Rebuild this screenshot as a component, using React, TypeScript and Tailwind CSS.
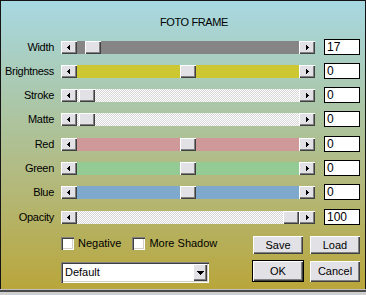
import React from "react";

const raised =
  "shadow-[inset_1px_1px_0_#ffffff,inset_-1px_-1px_0_#404040,inset_-2px_-2px_0_#808080]";
const sunken =
  "shadow-[inset_1px_1px_0_#808080,inset_2px_2px_0_#404040,inset_-1px_-1px_0_#ffffff,inset_-2px_-2px_0_#d4d0c8]";
const dither =
  "bg-[image:repeating-conic-gradient(#d6d6d6_0_25%,#ffffff_0_50%)] bg-[length:2px_2px]";

function Arrow({ dir }: { dir: "left" | "right" }) {
  return (
    <div className={`flex h-full w-[16px] shrink-0 items-center justify-center bg-[#e2e1e6] ${raised}`}>
      <svg width="3" height="5" shapeRendering="crispEdges" className={dir === "right" ? "ml-[1px]" : "mr-[1px]"}>
        {dir === "left" ? (
          <g fill="#000">
            <rect x="0" y="2" width="1" height="1" />
            <rect x="1" y="1" width="1" height="3" />
            <rect x="2" y="0" width="1" height="5" />
          </g>
        ) : (
          <g fill="#000">
            <rect x="0" y="0" width="1" height="5" />
            <rect x="1" y="1" width="1" height="3" />
            <rect x="2" y="2" width="1" height="1" />
          </g>
        )}
      </svg>
    </div>
  );
}

function Slider({ track, thumb }: { track: string; thumb: number }) {
  return (
    <div className="mt-[2px] flex h-[13px] w-[254px]">
      <Arrow dir="left" />
      <div className={`relative flex-1 ${track}`}>
        <div
          className={`absolute top-0 h-full w-[16px] bg-[#e2e1e6] ${raised}`}
          style={{ left: thumb }}
        />
      </div>
      <Arrow dir="right" />
    </div>
  );
}

const rows = [
  { label: "Width", track: "bg-[#858585]", thumb: 8, value: "17", mt: "mt-[11px]" },
  { label: "Brightness", track: "bg-[#cdc731]", thumb: 103, value: "0", mt: "mt-[8px]" },
  { label: "Stroke", track: dither, thumb: 2, value: "0", mt: "mt-[8px]" },
  { label: "Matte", track: dither, thumb: 2, value: "0", mt: "mt-[8px]" },
  { label: "Red", track: "bg-[#cf9999]", thumb: 103, value: "0", mt: "mt-[9px]" },
  { label: "Green", track: "bg-[#94ca94]", thumb: 103, value: "0", mt: "mt-[8px]" },
  { label: "Blue", track: "bg-[#7fa8cd]", thumb: 103, value: "0", mt: "mt-[8px]" },
  { label: "Opacity", track: dither, thumb: 206, value: "100", mt: "mt-[9px]" },
];

function Check({ label }: { label: string }) {
  return (
    <div className="flex items-center">
      <div className={`h-[13px] w-[13px] bg-white ${sunken}`} />
      <span className="ml-[4px] text-[11px] leading-[13px]">{label}</span>
    </div>
  );
}

export default function App() {
  return (
    <div className="h-[295px] w-[366px] bg-[#cfcfcf] font-['Liberation_Sans',Arial,sans-serif] text-black">
      <div className="flex h-[289px] flex-col border-x border-t border-[#141414] bg-[image:linear-gradient(180deg,#a7d8e2_0%,#abc7a9_35%,#b3b879_65%,#b9a63b_100%)]">
        <div className="mt-[15px] h-[12px] pl-[159px] text-[11px] leading-[12px] tracking-[-0.4px]">
          FOTO FRAME
        </div>
        {rows.map((r) => (
          <div key={r.label} className={`flex h-[16px] ${r.mt}`}>
            <div className="w-[53px] pt-[2px] text-right text-[11px] leading-[13px] tracking-[-0.3px]">{r.label}</div>
            <div className="ml-[7px]">
              <Slider track={r.track} thumb={r.thumb} />
            </div>
            <div className="ml-[9px] h-[16px] w-[36px] border border-black bg-white pl-[2px] text-[12px] leading-[14px]">
              {r.value}
            </div>
          </div>
        ))}
        <div className="mt-[11px] flex h-[18px]">
          <div className="ml-[60px] mt-[1px] flex h-[13px] gap-[11px]">
            <Check label="Negative" />
            <Check label="More Shadow" />
          </div>
          <div className="ml-auto mr-[5px] flex gap-[7px]">
            <div className={`flex h-[18px] w-[50px] items-center justify-center bg-[#e2e1e6] text-[11px] ${raised}`}>
              Save
            </div>
            <div className={`flex h-[18px] w-[50px] items-center justify-center bg-[#e2e1e6] text-[11px] ${raised}`}>
              Load
            </div>
          </div>
        </div>
        <div className="mt-[6px] flex h-[22px] items-start">
          <div className={`ml-[60px] mt-[2px] flex h-[21px] w-[148px] items-center bg-white ${sunken}`}>
            <span className="ml-[4px] flex-1 text-[11px] leading-[13px]">Default</span>
            <div className={`mr-[2px] flex h-[17px] w-[14px] items-center justify-center bg-[#e2e1e6] ${raised}`}>
              <svg width="7" height="4" shapeRendering="crispEdges">
                <g fill="#000">
                  <rect x="0" y="0" width="7" height="1" />
                  <rect x="1" y="1" width="5" height="1" />
                  <rect x="2" y="2" width="3" height="1" />
                  <rect x="3" y="3" width="1" height="1" />
                </g>
              </svg>
            </div>
          </div>
          <div className="ml-auto mr-[5px] flex items-start gap-[6px]">
            <div className="h-[22px] w-[52px] border border-black">
              <div className={`flex h-full w-full items-center justify-center bg-[#e2e1e6] text-[11px] ${raised}`}>
                OK
              </div>
            </div>
            <div className={`mt-[1px] flex h-[21px] w-[50px] items-center justify-center bg-[#e2e1e6] text-[11px] ${raised}`}>
              Cancel
            </div>
          </div>
        </div>
      </div>
      <div className="h-[1px] bg-[#bdbdbd]" />
      <div className="h-[2px] bg-[#4a4a4a]" />
    </div>
  );
}
